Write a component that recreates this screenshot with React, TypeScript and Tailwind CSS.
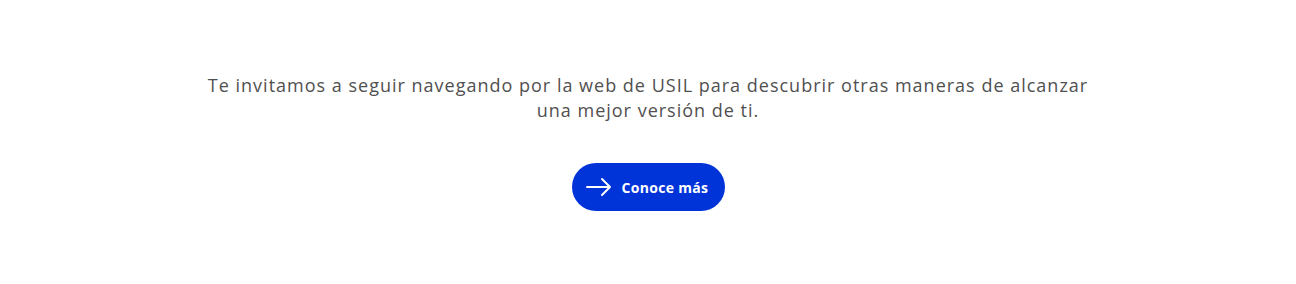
export default function App() {
  return (
    <div className="w-[1296px] h-[284px] bg-white flex flex-col items-center pt-[73px]" style={{ fontFamily: '"Open Sans", "Liberation Sans", sans-serif' }}>
      <p className="text-[18px] leading-[25px] tracking-[1px] text-[#505050] text-center max-w-[960px]">
        Te invitamos a seguir navegando por la web de USIL para descubrir otras maneras de alcanzar
        <br />
        una mejor versión de ti.
      </p>
      <a
        href="#"
        className="mt-[40px] h-[48px] w-[153px] rounded-full bg-[#0033d8] flex items-center pl-[14px] gap-[10px] text-white"
      >
        <svg width="26" height="20" viewBox="0 0 26 20" fill="none" stroke="currentColor" strokeWidth={2} strokeLinecap="round" strokeLinejoin="round">
          <path d="M1 10h23M16 2l8 8-8 8" />
        </svg>
        <span className="text-[14px] tracking-[0.3px] font-bold">Conoce más</span>
      </a>
    </div>
  );
}
